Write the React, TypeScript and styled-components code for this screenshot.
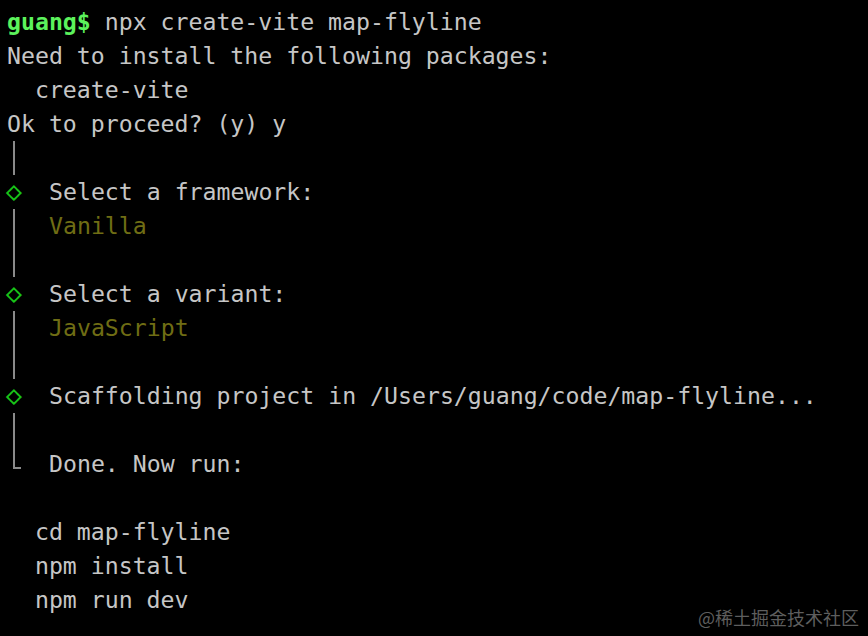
import React from "react";
import styled, { createGlobalStyle } from "styled-components";

const Global = createGlobalStyle`
  html, body {
    margin: 0;
    padding: 0;
    background: #000;
  }
  body {
    width: 868px;
    height: 636px;
    overflow: hidden;
  }
`;

const Screen = styled.div`
  position: relative;
  width: 868px;
  height: 636px;
  background: #000;
  padding: 5px 0 0 7px;
  box-sizing: border-box;
  font-family: "DejaVu Sans Mono", "Liberation Mono", monospace;
  font-size: 23.2px;
  line-height: 34px;
  color: #c6c6c6;
  white-space: pre;
`;

const Line = styled.div`
  display: flex;
  height: 34px;
  align-items: stretch;
`;

const Prompt = styled.span`
  color: #5cf25c;
  font-weight: bold;
`;

const Gutter = styled.span`
  position: relative;
  width: 42px;
  flex: 0 0 42px;
`;

const Bar = styled.span`
  position: absolute;
  left: 6px;
  top: 0;
  bottom: 0;
  width: 2px;
  background: #8a8a8a;
`;

const Corner = styled.span`
  position: absolute;
  left: 6px;
  top: 0;
  height: 20px;
  width: 6px;
  border-left: 2px solid #8a8a8a;
  border-bottom: 2px solid #8a8a8a;
`;

const Diamond = styled.span`
  position: absolute;
  left: -4px;
  top: -1px;
  width: 22px;
  text-align: center;
  color: #19c419;
  font-size: 27px;
  line-height: 34px;
`;

const Text = styled.span<{ $tone?: "dim" }>`
  color: ${(p) => (p.$tone === "dim" ? "#6f6d14" : "#c6c6c6")};
`;

const Watermark = styled.div`
  position: absolute;
  right: 9px;
  bottom: 7px;
  font-family: "Noto Sans CJK SC", "Noto Sans", sans-serif;
  font-size: 18px;
  line-height: 24px;
  color: #5e5e5e;
  white-space: nowrap;
`;

type Mark = "bar" | "diamond" | "corner";

const GutterLine: React.FC<{ mark: Mark; children?: React.ReactNode }> = ({ mark, children }) => (
  <Line>
    <Gutter>
      {mark === "bar" && <Bar />}
      {mark === "corner" && <Corner />}
      {mark === "diamond" && <Diamond>◇</Diamond>}
    </Gutter>
    {children}
  </Line>
);

export default function App() {
  return (
    <>
      <Global />
      <Screen>
        <Line>
          <Prompt>guang$</Prompt>
          <Text> npx create-vite map-flyline</Text>
        </Line>
        <Line>
          <Text>Need to install the following packages:</Text>
        </Line>
        <Line>
          <Text>  create-vite</Text>
        </Line>
        <Line>
          <Text>Ok to proceed? (y) y</Text>
        </Line>
        <GutterLine mark="bar" />
        <GutterLine mark="diamond">
          <Text>Select a framework:</Text>
        </GutterLine>
        <GutterLine mark="bar">
          <Text $tone="dim">Vanilla</Text>
        </GutterLine>
        <GutterLine mark="bar" />
        <GutterLine mark="diamond">
          <Text>Select a variant:</Text>
        </GutterLine>
        <GutterLine mark="bar">
          <Text $tone="dim">JavaScript</Text>
        </GutterLine>
        <GutterLine mark="bar" />
        <GutterLine mark="diamond">
          <Text>Scaffolding project in /Users/guang/code/map-flyline...</Text>
        </GutterLine>
        <GutterLine mark="bar" />
        <GutterLine mark="corner">
          <Text>Done. Now run:</Text>
        </GutterLine>
        <Line />
        <Line>
          <Text>  cd map-flyline</Text>
        </Line>
        <Line>
          <Text>  npm install</Text>
        </Line>
        <Line>
          <Text>  npm run dev</Text>
        </Line>
        <Watermark>@稀土掘金技术社区</Watermark>
      </Screen>
    </>
  );
}
